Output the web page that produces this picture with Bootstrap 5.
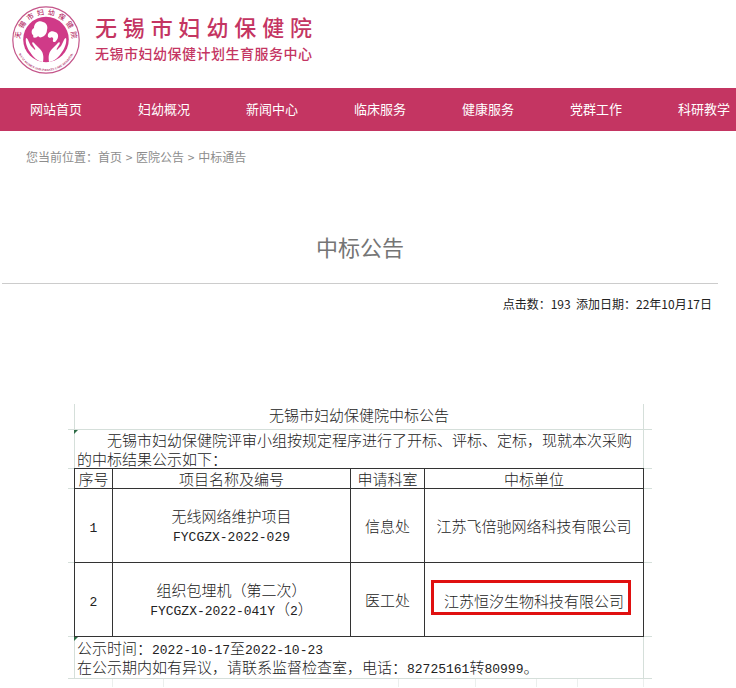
<!DOCTYPE html>
<html lang="zh-CN">
<head>
<meta charset="utf-8">
<meta name="viewport" content="width=device-width, initial-scale=1">
<title>中标公告 - 无锡市妇幼保健院</title>
<link href="https://cdn.jsdelivr.net/npm/bootstrap@5.3.0/dist/css/bootstrap.min.css" rel="stylesheet">
<style>
:root { --rose: #c43562; --faint: #d5dfda; --ink: #333; }
body { font-family: "Noto Sans CJK SC", sans-serif; font-size: 12px; line-height: 20px; color: #222; background: #fff; overflow-x: hidden; }
.site-head { padding: 5px 11px 13px; gap: 14px; }
.seal { width: 70px; height: 70px; }
.brand-names { width: 217px; padding-bottom: 7px; color: var(--rose); text-align: justify; text-align-last: justify; }
.brand-title { font-size: 22px; line-height: 32px; font-weight: 500; }
.brand-sub { font-size: 14px; line-height: 22px; font-weight: 500; }
.main-nav { background: var(--rose); padding-left: 2px; }
.main-nav .nav-link { width: 108px; padding: 11px 0 12px; font-size: 13px; color: #fff; text-align: center; white-space: nowrap; }
.crumbs { padding: 16px 26px; color: #8d8d8d; }
.crumbs a { color: inherit; text-decoration: none; }
.crumbs .sep { margin: 0 1px; }
.page-title { margin: 47px 16px 0 0; padding-bottom: 21px; font-size: 22px; line-height: 32px; font-weight: 400; color: #757575; text-align: center; }
.title-rule { margin: 0 18px 0 2px; border-top: 1px solid #ccc; opacity: 1; }
.meta-line { padding: 10px 24px 0 0; }
.sheet-wrap { margin: 90px 92px 0 74px; }
.sheet { width: 100%; table-layout: fixed; border-collapse: collapse; font-size: 15px; line-height: 19px; font-weight: 300; color: #222; }
.sheet th, .sheet td { position: relative; padding: 0; font-weight: 300; text-align: center; vertical-align: middle; border: 1px solid var(--ink); }
.sheet .plain { border-color: var(--faint); border-top-width: 0; }
.sheet .heading { padding-bottom: 3px; }
.sheet .note { text-align: left; padding: 0 2px; }
.sheet .intro { border-bottom-color: var(--ink); }
.sheet .opening { text-indent: 30px; }
.sheet tr > :first-child::before, .sheet tr > :last-child::after { content: ""; position: absolute; bottom: -1px; height: 1px; background: var(--faint); }
.sheet tr > :first-child::before { left: -7px; width: 6px; }
.sheet tr > :last-child::after { right: -9px; width: 8px; }
.flag-corner { position: absolute; top: 0; left: -1px; border-top: 4px solid #2d6b45; border-right: 4px solid transparent; }
.r-title { height: 25px; }
.r-intro { height: 39px; }
.r-head { height: 20px; }
.r-item { height: 74px; }
.r-foot { height: 42px; }
.code { font-family: "Liberation Mono", monospace; font-size: 13px; line-height: 1; font-weight: 400; }
.sheet td.winner { padding: 0 6px 3px 0; }
.flagged { display: inline-block; border: 3px solid #e01010; padding: 8px 4px 2px 10px; white-space: nowrap; }
.next-row { height: 8px; }
.next-row div { border-right: 1px solid #ebefed; }
.w-a { width: 39px; } .w-b { width: 51px; } .w-c { width: 235px; } .w-d { width: 77px; } .w-e { width: 61px; } .w-f { width: 41px; }
</style>
<script src="https://cdn.jsdelivr.net/npm/bootstrap@5.3.0/dist/js/bootstrap.bundle.min.js"></script>
</head>
<body>
<header>
  <div class="site-head d-flex align-items-center">
    <svg class="seal flex-shrink-0" viewBox="0 0 70 70" role="img" aria-label="医院院徽">
      <defs>
        <path id="arcTop" d="M11.400 46.500A26 26 0 1 1 58.600 46.500"/>
        <path id="arcLow" d="M5 36A30 30 0 0 0 65 36"/>
      </defs>
      <circle cx="35" cy="35" r="33.200" fill="#fff" stroke="#c4558a" stroke-width="1.200"/>
      <circle cx="35" cy="34.500" r="22.800" fill="#d03a88"/>
      <text font-size="7" fill="#b8326c" font-weight="500"><textPath href="#arcTop" startOffset="50%" text-anchor="middle">无&#160; 锡&#160; 市&#160; 妇&#160; 幼&#160; 保&#160; 健&#160; 院</textPath></text>
      <text font-size="3" fill="#a8245c" font-weight="700" font-family="Liberation Serif, serif"><textPath href="#arcLow" startOffset="50%" text-anchor="middle">WUXI WOMEN AND INFANTS CARE HOSPITAL</textPath></text>
      <g fill="#fff">
        <path d="M21 29C20 26 21 24 23 23C23 18 28 15 32 17C36 18 37 22 36 25C36 28 34 31 31 32C29 33 28 32 27 31C26 33 23 33 22 32C23 31 22 30 21 29Z"/>
        <path d="M37 32C36 28 40 25 44 27C48 28 48 33 45 36C44 38 41 37 42 35C43 33 41 31 39 33Z"/>
        <path d="M15 33C17 33 18 38 20 41L24 45C25 44 23 42 22 40C20 37 22 36 24 39L29 44C32 47 33 51 32 57C26 56 22 52 19 47C16 43 14 37 15 33Z"/>
        <path d="M55 33C53 33 52 38 50 41L46 45C45 44 47 42 48 40C50 37 48 36 46 39L41 44C38 47 37 51 38 57C44 56 48 52 51 47C54 43 56 37 55 33Z"/>
      </g>
    </svg>
    <div class="brand-names">
      <div class="brand-title">无锡市妇幼保健院</div>
      <div class="brand-sub">无锡市妇幼保健计划生育服务中心</div>
    </div>
  </div>
  <nav class="main-nav overflow-hidden" aria-label="主导航">
    <ul class="nav flex-nowrap">
      <li><a class="nav-link" href="#">网站首页</a></li>
      <li><a class="nav-link" href="#">妇幼概况</a></li>
      <li><a class="nav-link" href="#">新闻中心</a></li>
      <li><a class="nav-link" href="#">临床服务</a></li>
      <li><a class="nav-link" href="#">健康服务</a></li>
      <li><a class="nav-link" href="#">党群工作</a></li>
      <li><a class="nav-link" href="#">科研教学</a></li>
    </ul>
  </nav>
</header>
<main>
  <div class="crumbs">您当前位置：<a href="#">首页</a> <span class="sep">&gt;</span> <a href="#">医院公告</a> <span class="sep">&gt;</span> <a href="#">中标通告</a></div>
  <h1 class="page-title">中标公告</h1>
  <hr class="title-rule">
  <div class="meta-line text-end">点击数：193&nbsp; 添加日期：22年10月17日</div>
  <div class="sheet-wrap">
    <table class="sheet">
      <colgroup><col style="width:38px"><col style="width:238px"><col style="width:74px"><col></colgroup>
      <tbody>
        <tr class="r-title"><td class="plain heading" colspan="4">无锡市妇幼保健院中标公告</td></tr>
        <tr class="r-intro"><td class="plain note intro" colspan="4"><i class="flag-corner"></i><div class="opening">无锡市妇幼保健院评审小组按规定程序进行了开标、评标、定标，现就本次采购的中标结果公示如下：</div></td></tr>
        <tr class="r-head"><th>序号</th><th>项目名称及编号</th><th>申请科室</th><th>中标单位</th></tr>
        <tr class="r-item"><td><span class="code">1</span></td><td>无线网络维护项目<br><span class="code">FYCGZX-2022-029</span></td><td>信息处</td><td>江苏飞倍驰网络科技有限公司</td></tr>
        <tr class="r-item"><td><span class="code">2</span></td><td>组织包埋机（第二次）<br><span class="code">FYCGZX-2022-041Y</span>（<span class="code">2</span>）</td><td>医工处</td><td class="winner"><span class="flagged">江苏恒汐生物科技有限公司</span></td></tr>
        <tr class="r-foot"><td class="plain note" colspan="4"><i class="flag-corner"></i>公示时间：<span class="code">2022-10-17</span>至<span class="code">2022-10-23</span><br>在公示期内如有异议，请联系监督检查室，电话：<span class="code">82725161</span>转<span class="code">80999</span>。</td></tr>
      </tbody>
    </table>
    <div class="next-row d-flex" aria-hidden="true"><div class="w-a"></div><div class="w-b"></div><div class="w-c"></div><div class="w-d"></div><div class="w-e"></div><div class="w-f"></div><div class="flex-fill"></div></div>
  </div>
</main>
</body>
</html>
